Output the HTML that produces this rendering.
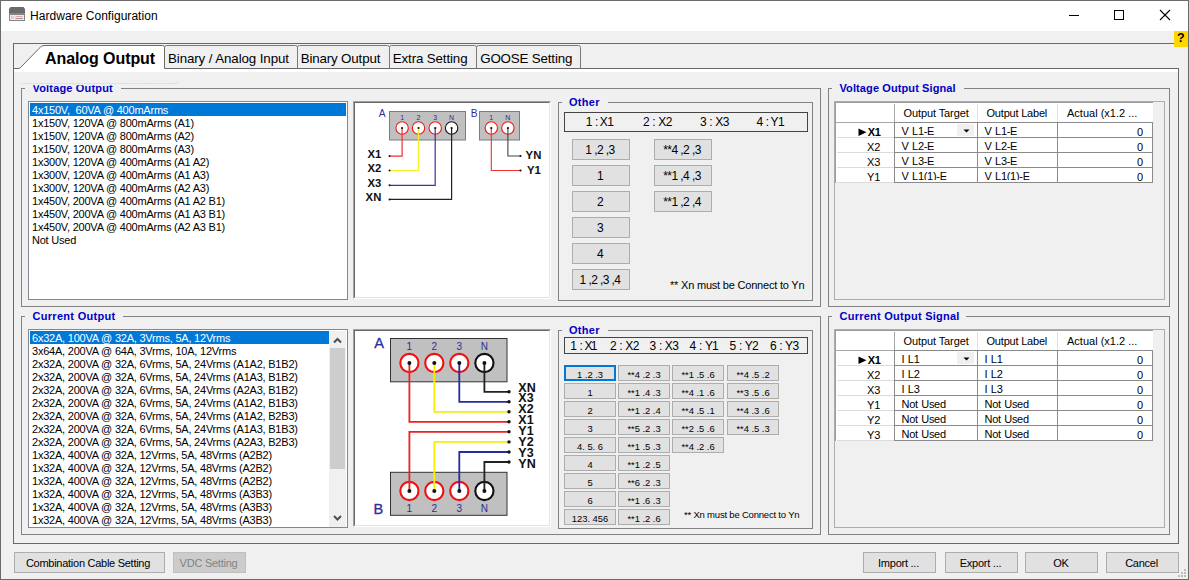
<!DOCTYPE html><html><head><meta charset="utf-8"><title>Hardware Configuration</title><style>
*{box-sizing:border-box;margin:0;padding:0}
html,body{width:1189px;height:580px;overflow:hidden;background:#f0f0f0}
body{position:relative;font-family:"Liberation Sans",sans-serif;font-size:11px;color:#000;-webkit-font-smoothing:antialiased}
.a{position:absolute}
.t{position:absolute;white-space:pre;line-height:1}
.win{left:0;top:0;width:1189px;height:580px;border:1px solid #6b6b6b;z-index:50;pointer-events:none}
.title{left:1px;top:1px;width:1187px;height:30px;background:#fff}
.gb{position:absolute;border:1px solid #838383}
.gbl{position:absolute;background:#f0f0f0;color:#0000c4;font-weight:bold;font-size:11px;white-space:pre;line-height:13px;height:13px}
.lb{position:absolute;background:#fff;border:1px solid #828790;overflow:hidden}
.li{position:absolute;left:1px;height:13px;line-height:15px;overflow:hidden;font-size:11px;letter-spacing:-0.22px;white-space:pre;padding-left:2px}
.sel{background:#0078d7;color:#fff}
.pb{position:absolute;background:#fff;border-style:solid;border-width:1px;border-color:#a0a0a0 #fff #fff #a0a0a0;}
.pb:before{content:"";position:absolute;left:0;top:0;right:0;bottom:0;border-style:solid;border-width:1px;border-color:#696969 #e3e3e3 #e3e3e3 #696969}
.btn{position:absolute;background:#e1e1e1;border:1px solid #adadad;text-align:center;white-space:pre;font-size:11px}
.btn.dis{background:#cccccc;border-color:#bfbfbf;color:#838383}
.btn.foc{border:2px solid #0078d7}
.lbox{position:absolute;border:1px solid #444}
svg{position:absolute;left:0;top:0;overflow:visible}
.grid{position:absolute;background:#f0f0f0;border-style:solid;border-width:1px;border-color:#a0a0a0 #fff #fff #a0a0a0}
.grid:before{content:"";position:absolute;left:0;top:0;right:0;bottom:0;border-style:solid;border-width:1px;border-color:#696969 #e3e3e3 #e3e3e3 #696969}
.cell{position:absolute;background:#fff;white-space:pre;font-size:11px;overflow:hidden}
</style></head><body>
<div class="a title"></div>
<svg width="1189" height="32" viewBox="0 0 1189 32">
<path d="M10.5 7 H23.5 L25 9 V13 H9 V9 Z" fill="#6a6a6a"/>
<rect x="9" y="13" width="16" height="8" fill="#858585"/>
<rect x="10" y="15" width="14" height="5" fill="#ececec"/>
<rect x="11" y="16" width="1.5" height="3" fill="#f5b5a8"/><rect x="13" y="16" width="1" height="3" fill="#f5c5b8"/>
<rect x="15.5" y="16" width="7" height="1" fill="#f0a0a8"/><rect x="15.5" y="18" width="7.5" height="1" fill="#9a9a9a"/>
<path d="M1069 15.5 H1079" stroke="#000" stroke-width="1" fill="none"/>
<rect x="1114.5" y="10.5" width="9" height="9" stroke="#000" stroke-width="1" fill="none"/>
<path d="M1160 10 L1170 20 M1170 10 L1160 20" stroke="#000" stroke-width="1.1" fill="none"/>
</svg>
<div class="t" style="left:30px;top:9px;font-size:12px;line-height:14px;letter-spacing:0.04px">Hardware Configuration</div>
<div class="a" style="left:1174px;top:31px;width:14px;height:16px;background:#ffd700;z-index:5"></div>
<div class="t" style="left:1177px;top:31px;font-size:12.5px;font-weight:bold;z-index:6;line-height:14px">?</div>
<div class="a" style="left:13px;top:43px;width:1175px;height:1px;background:#696969"></div>
<div class="a" style="left:13px;top:43px;width:1px;height:501px;background:#696969"></div>
<div class="a" style="left:13px;top:68px;width:1166px;height:476px;border:1px solid #696969"></div>
<div class="a" style="left:14px;top:69px;width:1164px;height:3px;background:#fff"></div>
<svg width="1189" height="80" viewBox="0 0 1189 80">
<path d="M18 68.5 C20 68.5 20.5 67.5 22 66 L39 48.5 C41 46.5 42 45.5 45 45.5 H162.500 Q164.500 45.500 164.500 47.500 V69 H18 Z" fill="#fff" stroke="none"/>
<path d="M13 68.5 H18 C20 68.5 20.5 67.500 22 66 L39 48.500 C41 46.500 42 45.500 45 45.500 H162.500 Q164.500 45.500 164.500 47.500 V68.500" fill="none" stroke="#696969" stroke-width="1"/>
<path d="M164.500 47.500 Q164.500 45.500 166.500 45.500 H295.500 Q297.500 45.500 297.500 47.500 V68.500" fill="none" stroke="#7a7a7a"/>
<path d="M297.500 47.500 Q297.500 45.500 299.500 45.500 H387.500 Q389.500 45.500 389.500 47.500 V68.500" fill="none" stroke="#7a7a7a"/>
<path d="M389.500 47.500 Q389.500 45.500 391.500 45.500 H474.500 Q476.500 45.500 476.500 47.500 V68.500" fill="none" stroke="#7a7a7a"/>
<path d="M476.500 47.500 Q476.500 45.500 478.500 45.500 H578.500 Q580.500 45.500 580.500 47.500 V68.500" fill="none" stroke="#7a7a7a"/>
</svg>
<div class="t" style="left:45px;top:50px;font-size:16px;font-weight:bold;line-height:18px;letter-spacing:-0.08px">Analog Output</div>
<div class="t" style="left:168px;top:51px;font-size:13.33px;line-height:16px;letter-spacing:-0.1px">Binary / Analog Input</div>
<div class="t" style="left:300.7px;top:51px;font-size:13.33px;line-height:16px;letter-spacing:-0.15px">Binary Output</div>
<div class="t" style="left:392.8px;top:51px;font-size:13.33px;line-height:16px;letter-spacing:-0.13px">Extra Setting</div>
<div class="t" style="left:480.2px;top:51px;font-size:13.33px;line-height:16px;letter-spacing:-0.16px">GOOSE Setting</div>
<div class="a" style="left:21px;top:83px;width:156px;height:1px;background:repeating-linear-gradient(90deg,#dcdcdc 0,#dcdcdc 2px,#e9e9e9 2px,#e9e9e9 3px)"></div><div class="a" style="left:177px;top:81px;width:1px;height:3px;background:#dfdfdf"></div>
<div class="gb" style="left:21px;top:88px;width:800px;height:219px"></div>
<div class="gbl" style="left:25.0px;top:82px;width:96.0px;padding-left:7.500px;letter-spacing:0.17px;clip-path:inset(3.2px 0 0 0)">Voltage Output</div>
<div class="gb" style="left:21px;top:316px;width:800px;height:219px"></div>
<div class="gbl" style="left:25.0px;top:310px;width:97.5px;padding-left:7.500px;letter-spacing:0.3px">Current Output</div>
<div class="gb" style="left:828px;top:88px;width:342px;height:219px"></div>
<div class="gbl" style="left:832.0px;top:82px;width:132.0px;padding-left:7.500px;letter-spacing:0.1px">Voltage Output Signal</div>
<div class="gb" style="left:828px;top:316px;width:342px;height:219px"></div>
<div class="gbl" style="left:832.0px;top:310px;width:133.5px;padding-left:7.500px;letter-spacing:0.25px">Current Output Signal</div>
<div class="gb" style="left:558px;top:102px;width:255px;height:199px"></div>
<div class="gbl" style="left:561.5px;top:96px;width:46.5px;padding-left:7.500px;letter-spacing:0.3px">Other</div>
<div class="gb" style="left:558px;top:330px;width:255px;height:199px"></div>
<div class="gbl" style="left:561.5px;top:324px;width:46.5px;padding-left:7.500px;letter-spacing:0.3px">Other</div>
<div class="lb" style="left:28px;top:101px;width:320px;height:199px">
<div class="li sel" style="top:1px;width:316px">4x150V,  60VA @ 400mArms</div>
<div class="li" style="top:14px;width:316px">1x150V, 120VA @ 800mArms (A1)</div>
<div class="li" style="top:27px;width:316px">1x150V, 120VA @ 800mArms (A2)</div>
<div class="li" style="top:40px;width:316px">1x150V, 120VA @ 800mArms (A3)</div>
<div class="li" style="top:53px;width:316px">1x300V, 120VA @ 400mArms (A1 A2)</div>
<div class="li" style="top:66px;width:316px">1x300V, 120VA @ 400mArms (A1 A3)</div>
<div class="li" style="top:79px;width:316px">1x300V, 120VA @ 400mArms (A2 A3)</div>
<div class="li" style="top:92px;width:316px">1x450V, 200VA @ 400mArms (A1 A2 B1)</div>
<div class="li" style="top:105px;width:316px">1x450V, 200VA @ 400mArms (A1 A3 B1)</div>
<div class="li" style="top:118px;width:316px">1x450V, 200VA @ 400mArms (A2 A3 B1)</div>
<div class="li" style="top:131px;width:316px">Not Used</div>
</div>
<div class="lb" style="left:28px;top:329px;width:320px;height:199px">
<div class="li sel" style="top:1px;width:299px">6x32A, 100VA @ 32A, 3Vrms, 5A, 12Vrms</div>
<div class="li" style="top:14px;width:299px">3x64A, 200VA @ 64A, 3Vrms, 10A, 12Vrms</div>
<div class="li" style="top:27px;width:299px">2x32A, 200VA @ 32A, 6Vrms, 5A, 24Vrms (A1A2, B1B2)</div>
<div class="li" style="top:40px;width:299px">2x32A, 200VA @ 32A, 6Vrms, 5A, 24Vrms (A1A3, B1B2)</div>
<div class="li" style="top:53px;width:299px">2x32A, 200VA @ 32A, 6Vrms, 5A, 24Vrms (A2A3, B1B2)</div>
<div class="li" style="top:66px;width:299px">2x32A, 200VA @ 32A, 6Vrms, 5A, 24Vrms (A1A2, B1B3)</div>
<div class="li" style="top:79px;width:299px">2x32A, 200VA @ 32A, 6Vrms, 5A, 24Vrms (A1A2, B2B3)</div>
<div class="li" style="top:92px;width:299px">2x32A, 200VA @ 32A, 6Vrms, 5A, 24Vrms (A1A3, B1B3)</div>
<div class="li" style="top:105px;width:299px">2x32A, 200VA @ 32A, 6Vrms, 5A, 24Vrms (A2A3, B2B3)</div>
<div class="li" style="top:118px;width:299px">1x32A, 400VA @ 32A, 12Vrms, 5A, 48Vrms (A2B2)</div>
<div class="li" style="top:131px;width:299px">1x32A, 400VA @ 32A, 12Vrms, 5A, 48Vrms (A2B2)</div>
<div class="li" style="top:144px;width:299px">1x32A, 400VA @ 32A, 12Vrms, 5A, 48Vrms (A2B2)</div>
<div class="li" style="top:157px;width:299px">1x32A, 400VA @ 32A, 12Vrms, 5A, 48Vrms (A3B3)</div>
<div class="li" style="top:170px;width:299px">1x32A, 400VA @ 32A, 12Vrms, 5A, 48Vrms (A3B3)</div>
<div class="li" style="top:183px;width:299px">1x32A, 400VA @ 32A, 12Vrms, 5A, 48Vrms (A3B3)</div>
<div class="a" style="left:300px;top:1px;width:17px;height:197px;background:#f0f0f0"></div>
<div class="a" style="left:301px;top:18px;width:15px;height:121px;background:#cdcdcd"></div>
<svg width="320" height="199" viewBox="0 0 320 199"><path d="M305 12.5 L308.5 9 L312 12.500" fill="none" stroke="#505050" stroke-width="2"/><path d="M305 186 L308.5 189.500 L312 186" fill="none" stroke="#505050" stroke-width="2"/></svg>
</div>
<div class="pb" style="left:353px;top:101px;width:198px;height:198px"></div>
<div class="pb" style="left:353px;top:329px;width:198px;height:198px"></div>
<svg width="1189" height="580" viewBox="0 0 1189 580" style="font-family:'Liberation Sans',sans-serif">
<rect x="389.500" y="111.500" width="76" height="28.500" fill="#c0c0c0" stroke="#7d7d7d"/>
<rect x="479.500" y="111.500" width="40" height="28.500" fill="#c0c0c0" stroke="#7d7d7d"/>
<circle cx="402.1" cy="128" r="6.2" fill="#fff" stroke="#f01818" stroke-width="1.1"/>
<circle cx="418.5" cy="128" r="6.2" fill="#fff" stroke="#f01818" stroke-width="1.1"/>
<circle cx="435.2" cy="128" r="6.2" fill="#fff" stroke="#f01818" stroke-width="1.1"/>
<circle cx="451.6" cy="128" r="6.2" fill="#fff" stroke="#111" stroke-width="1.1"/>
<circle cx="491.3" cy="128" r="6.2" fill="#fff" stroke="#f01818" stroke-width="1.1"/>
<circle cx="507.9" cy="128" r="6.2" fill="#fff" stroke="#f01818" stroke-width="1.1"/>
<path d="M402.1 128 V156.05 H390" fill="none" stroke="#f03030" stroke-width="1.2"/>
<circle cx="389.500" cy="156.05" r="1" fill="#111"/>
<circle cx="402.1" cy="128" r="1.1" fill="#111"/>
<path d="M418.5 128 V170.5 H390" fill="none" stroke="#f5ee20" stroke-width="1.2"/>
<circle cx="389.500" cy="170.5" r="1" fill="#111"/>
<circle cx="418.5" cy="128" r="1.1" fill="#111"/>
<path d="M435.2 128 V185.3 H390" fill="none" stroke="#3434ac" stroke-width="1.2"/>
<circle cx="389.500" cy="185.3" r="1" fill="#111"/>
<circle cx="435.2" cy="128" r="1.1" fill="#111"/>
<path d="M451.6 128 V199.4 H390" fill="none" stroke="#222" stroke-width="1.2"/>
<circle cx="389.500" cy="199.4" r="1" fill="#111"/>
<circle cx="451.6" cy="128" r="1.1" fill="#111"/>
<path d="M507.9 128 V156 H520.500" fill="none" stroke="#444" stroke-width="1.1"/>
<path d="M491.3 128 V170.500 H520.500" fill="none" stroke="#f03030" stroke-width="1.1"/>
<circle cx="507.9" cy="128" r="1.1" fill="#111"/>
<circle cx="491.3" cy="128" r="1.1" fill="#111"/>
<circle cx="520.5" cy="156" r="1.1" fill="#111"/>
<circle cx="520.5" cy="170.5" r="1.1" fill="#111"/>
<text x="402.1" y="119.500" font-size="7" fill="#2c2c9c" text-anchor="middle">1</text>
<text x="418.5" y="119.500" font-size="7" fill="#2c2c9c" text-anchor="middle">2</text>
<text x="435.2" y="119.500" font-size="7" fill="#2c2c9c" text-anchor="middle">3</text>
<text x="451.6" y="119.500" font-size="7" fill="#2c2c9c" text-anchor="middle">N</text>
<text x="491.3" y="119.500" font-size="7" fill="#2c2c9c" text-anchor="middle">1</text>
<text x="507.9" y="119.500" font-size="7" fill="#2c2c9c" text-anchor="middle">N</text>
<text x="378.800" y="117" font-size="10.200" fill="#2c2c9c">A</text>
<text x="470.800" y="117" font-size="10.200" fill="#2c2c9c">B</text>
<text x="381.300" y="157.8" font-size="11.300" font-weight="bold" fill="#111" text-anchor="end">X1</text>
<text x="381.300" y="172.3" font-size="11.300" font-weight="bold" fill="#111" text-anchor="end">X2</text>
<text x="381.300" y="186.8" font-size="11.300" font-weight="bold" fill="#111" text-anchor="end">X3</text>
<text x="381.300" y="201.3" font-size="11.300" font-weight="bold" fill="#111" text-anchor="end">XN</text>
<text x="525.600" y="159.400" font-size="11.300" font-weight="bold" fill="#111">YN</text>
<text x="527" y="173.900" font-size="11.300" font-weight="bold" fill="#111">Y1</text>
<rect x="390.500" y="338.500" width="116.500" height="43.300" fill="#c0c0c0" stroke="#333"/>
<rect x="390.500" y="472.300" width="116.500" height="43" fill="#c0c0c0" stroke="#333"/>
<circle cx="409.4" cy="363" r="9.1" fill="#fff" stroke="#f01010" stroke-width="2.1"/>
<circle cx="409.4" cy="491" r="9.1" fill="#fff" stroke="#f01010" stroke-width="2.1"/>
<circle cx="434.3" cy="363" r="9.1" fill="#fff" stroke="#f01010" stroke-width="2.1"/>
<circle cx="434.3" cy="491" r="9.1" fill="#fff" stroke="#f01010" stroke-width="2.1"/>
<circle cx="459.3" cy="363" r="9.1" fill="#fff" stroke="#f01010" stroke-width="2.1"/>
<circle cx="459.3" cy="491" r="9.1" fill="#fff" stroke="#f01010" stroke-width="2.1"/>
<circle cx="484.4" cy="363" r="9.1" fill="#fff" stroke="#111" stroke-width="2.1"/>
<circle cx="484.4" cy="491" r="9.1" fill="#fff" stroke="#111" stroke-width="2.1"/>
<path d="M409.4 363 V421.8 H509" fill="none" stroke="#f02020" stroke-width="1.8"/>
<path d="M409.4 491 V431.8 H509" fill="none" stroke="#f02020" stroke-width="1.8"/>
<circle cx="509" cy="421.8" r="1.7" fill="#111"/>
<circle cx="509" cy="431.8" r="1.7" fill="#111"/>
<circle cx="409.4" cy="363" r="2" fill="#111"/><circle cx="409.4" cy="491" r="2" fill="#111"/>
<path d="M434.3 363 V411.8 H509" fill="none" stroke="#f8f000" stroke-width="1.8"/>
<path d="M434.3 491 V441.9 H509" fill="none" stroke="#f8f000" stroke-width="1.8"/>
<circle cx="509" cy="411.8" r="1.7" fill="#111"/>
<circle cx="509" cy="441.9" r="1.7" fill="#111"/>
<circle cx="434.3" cy="363" r="2" fill="#111"/><circle cx="434.3" cy="491" r="2" fill="#111"/>
<path d="M459.3 363 V401.8 H509" fill="none" stroke="#2a2aa0" stroke-width="1.8"/>
<path d="M459.3 491 V452 H509" fill="none" stroke="#2a2aa0" stroke-width="1.8"/>
<circle cx="509" cy="401.8" r="1.7" fill="#111"/>
<circle cx="509" cy="452" r="1.7" fill="#111"/>
<circle cx="459.3" cy="363" r="2" fill="#111"/><circle cx="459.3" cy="491" r="2" fill="#111"/>
<path d="M484.4 363 V391.8 H509" fill="none" stroke="#222" stroke-width="1.8"/>
<path d="M484.4 491 V462 H509" fill="none" stroke="#222" stroke-width="1.8"/>
<circle cx="509" cy="391.8" r="1.7" fill="#111"/>
<circle cx="509" cy="462" r="1.7" fill="#111"/>
<circle cx="484.4" cy="363" r="2" fill="#111"/><circle cx="484.4" cy="491" r="2" fill="#111"/>
<text x="409.4" y="349.500" font-size="10" fill="#2c2c9c" text-anchor="middle">1</text>
<text x="409.4" y="512" font-size="10" fill="#2c2c9c" text-anchor="middle">1</text>
<text x="434.3" y="349.500" font-size="10" fill="#2c2c9c" text-anchor="middle">2</text>
<text x="434.3" y="512" font-size="10" fill="#2c2c9c" text-anchor="middle">2</text>
<text x="459.3" y="349.500" font-size="10" fill="#2c2c9c" text-anchor="middle">3</text>
<text x="459.3" y="512" font-size="10" fill="#2c2c9c" text-anchor="middle">3</text>
<text x="484.4" y="349.500" font-size="10" fill="#2c2c9c" text-anchor="middle">N</text>
<text x="484.4" y="512" font-size="10" fill="#2c2c9c" text-anchor="middle">N</text>
<text x="374.200" y="347.600" font-size="14.600" fill="#2c2c9c" stroke="#2c2c9c" stroke-width="0.3">A</text>
<text x="373.500" y="514.400" font-size="14.600" fill="#2c2c9c" stroke="#2c2c9c" stroke-width="0.3">B</text>
<text x="518.300" y="391.5" font-size="12.500" font-weight="bold" fill="#111">XN</text>
<text x="518.300" y="402.4" font-size="12.500" font-weight="bold" fill="#111">X3</text>
<text x="518.300" y="413.3" font-size="12.500" font-weight="bold" fill="#111">X2</text>
<text x="518.300" y="424.2" font-size="12.500" font-weight="bold" fill="#111">X1</text>
<text x="518.300" y="435.1" font-size="12.500" font-weight="bold" fill="#111">Y1</text>
<text x="518.300" y="446" font-size="12.500" font-weight="bold" fill="#111">Y2</text>
<text x="518.300" y="457" font-size="12.500" font-weight="bold" fill="#111">Y3</text>
<text x="518.300" y="468.1" font-size="12.500" font-weight="bold" fill="#111">YN</text>
</svg>
<div class="lbox" style="left:564px;top:112px;width:244px;height:20px"></div>
<div class="t" style="left:585.7px;top:115px;font-size:12px;line-height:14px;word-spacing:0.4px;letter-spacing:-0.55px">1 : <span style="margin-left:-1.2px;letter-spacing:-0.55px">X</span>1</div>
<div class="t" style="left:643px;top:115px;font-size:12px;line-height:14px;word-spacing:0.4px;letter-spacing:-0.55px">2 : X2</div>
<div class="t" style="left:700px;top:115px;font-size:12px;line-height:14px;word-spacing:0.4px;letter-spacing:-0.55px">3 : X3</div>
<div class="t" style="left:756.5px;top:115px;font-size:12px;line-height:14px;word-spacing:0.4px;letter-spacing:-0.55px">4 : <span style="margin-left:-1.2px;letter-spacing:-0.55px">Y</span>1</div>
<div class="btn" style="left:572px;top:139px;width:58px;height:21px;line-height:21px;font-size:12px;letter-spacing:-0.58px;padding-right:2px">1 ,2 ,3</div>
<div class="btn" style="left:572px;top:165px;width:58px;height:21px;line-height:21px;font-size:12px;letter-spacing:-0.58px;padding-right:2px">1</div>
<div class="btn" style="left:572px;top:191px;width:58px;height:21px;line-height:21px;font-size:12px;letter-spacing:-0.58px;padding-right:2px">2</div>
<div class="btn" style="left:572px;top:217px;width:58px;height:21px;line-height:21px;font-size:12px;letter-spacing:-0.58px;padding-right:2px">3</div>
<div class="btn" style="left:572px;top:243px;width:58px;height:21px;line-height:21px;font-size:12px;letter-spacing:-0.58px;padding-right:2px">4</div>
<div class="btn" style="left:572px;top:269px;width:58px;height:21px;line-height:21px;font-size:12px;letter-spacing:-0.58px;padding-right:2px">1 ,2 ,3 ,4</div>
<div class="btn" style="left:654px;top:139px;width:58px;height:21px;line-height:21px;font-size:12px;letter-spacing:-0.58px;padding-right:2px">**4 ,2 ,3</div>
<div class="btn" style="left:654px;top:165px;width:58px;height:21px;line-height:21px;font-size:12px;letter-spacing:-0.58px;padding-right:2px">**1 ,4 ,3</div>
<div class="btn" style="left:654px;top:191px;width:58px;height:21px;line-height:21px;font-size:12px;letter-spacing:-0.58px;padding-right:2px">**1 ,2 ,4</div>
<div class="t" style="left:670px;top:279px;font-size:11px;line-height:13px;letter-spacing:-0.2px">** Xn must be Connect to Yn</div>
<div class="lbox" style="left:564px;top:337px;width:244px;height:17px"></div>
<div class="t" style="left:570.3px;top:339px;font-size:12px;line-height:14px;word-spacing:0.4px;letter-spacing:-0.55px">1 : <span style="margin-left:-1.0px;letter-spacing:-1.75px">X</span>1</div>
<div class="t" style="left:610px;top:339px;font-size:12px;line-height:14px;word-spacing:0.4px;letter-spacing:-0.55px">2 : X2</div>
<div class="t" style="left:649.6px;top:339px;font-size:12px;line-height:14px;word-spacing:0.4px;letter-spacing:-0.55px">3 : X3</div>
<div class="t" style="left:689.6px;top:339px;font-size:12px;line-height:14px;word-spacing:0.4px;letter-spacing:-0.55px">4 : <span style="margin-left:0px;letter-spacing:-1.0px">Y</span>1</div>
<div class="t" style="left:729.6px;top:339px;font-size:12px;line-height:14px;word-spacing:0.4px;letter-spacing:-0.55px">5 : Y2</div>
<div class="t" style="left:769.9px;top:339px;font-size:12px;line-height:14px;word-spacing:0.4px;letter-spacing:-0.55px">6 : Y3</div>
<div class="btn foc" style="left:564px;top:365px;width:52px;height:16px;line-height:13px;font-size:9.400px;letter-spacing:-0.02px;padding-top:1px">1 .2 .3</div>
<div class="btn" style="left:564px;top:383px;width:52px;height:16px;line-height:15px;font-size:9.400px;letter-spacing:-0.02px;padding-top:1px">1</div>
<div class="btn" style="left:564px;top:401px;width:52px;height:16px;line-height:15px;font-size:9.400px;letter-spacing:-0.02px;padding-top:1px">2</div>
<div class="btn" style="left:564px;top:419px;width:52px;height:16px;line-height:15px;font-size:9.400px;letter-spacing:-0.02px;padding-top:1px">3</div>
<div class="btn" style="left:564px;top:437px;width:52px;height:16px;line-height:15px;font-size:9.400px;letter-spacing:-0.02px;padding-top:1px">4. 5. 6</div>
<div class="btn" style="left:564px;top:455px;width:52px;height:16px;line-height:15px;font-size:9.400px;letter-spacing:-0.02px;padding-top:1px">4</div>
<div class="btn" style="left:564px;top:473px;width:52px;height:16px;line-height:15px;font-size:9.400px;letter-spacing:-0.02px;padding-top:1px">5</div>
<div class="btn" style="left:564px;top:491px;width:52px;height:16px;line-height:15px;font-size:9.400px;letter-spacing:-0.02px;padding-top:1px">6</div>
<div class="btn" style="left:564px;top:509px;width:52px;height:16px;line-height:15px;font-size:9.400px;letter-spacing:-0.02px;padding-top:1px">123. 456</div>
<div class="btn" style="left:618px;top:365px;width:52px;height:16px;line-height:15px;font-size:9.400px;letter-spacing:-0.02px;padding-top:1px">**4 .2 .3</div>
<div class="btn" style="left:618px;top:383px;width:52px;height:16px;line-height:15px;font-size:9.400px;letter-spacing:-0.02px;padding-top:1px">**1 .4 .3</div>
<div class="btn" style="left:618px;top:401px;width:52px;height:16px;line-height:15px;font-size:9.400px;letter-spacing:-0.02px;padding-top:1px">**1 .2 .4</div>
<div class="btn" style="left:618px;top:419px;width:52px;height:16px;line-height:15px;font-size:9.400px;letter-spacing:-0.02px;padding-top:1px">**5 .2 .3</div>
<div class="btn" style="left:618px;top:437px;width:52px;height:16px;line-height:15px;font-size:9.400px;letter-spacing:-0.02px;padding-top:1px">**1 .5 .3</div>
<div class="btn" style="left:618px;top:455px;width:52px;height:16px;line-height:15px;font-size:9.400px;letter-spacing:-0.02px;padding-top:1px">**1 .2 .5</div>
<div class="btn" style="left:618px;top:473px;width:52px;height:16px;line-height:15px;font-size:9.400px;letter-spacing:-0.02px;padding-top:1px">**6 .2 .3</div>
<div class="btn" style="left:618px;top:491px;width:52px;height:16px;line-height:15px;font-size:9.400px;letter-spacing:-0.02px;padding-top:1px">**1 .6 .3</div>
<div class="btn" style="left:618px;top:509px;width:52px;height:16px;line-height:15px;font-size:9.400px;letter-spacing:-0.02px;padding-top:1px">**1 .2 .6</div>
<div class="btn" style="left:672px;top:365px;width:52px;height:16px;line-height:15px;font-size:9.400px;letter-spacing:-0.02px;padding-top:1px">**1 .5 .6</div>
<div class="btn" style="left:672px;top:383px;width:52px;height:16px;line-height:15px;font-size:9.400px;letter-spacing:-0.02px;padding-top:1px">**4 .1 .6</div>
<div class="btn" style="left:672px;top:401px;width:52px;height:16px;line-height:15px;font-size:9.400px;letter-spacing:-0.02px;padding-top:1px">**4 .5 .1</div>
<div class="btn" style="left:672px;top:419px;width:52px;height:16px;line-height:15px;font-size:9.400px;letter-spacing:-0.02px;padding-top:1px">**2 .5 .6</div>
<div class="btn" style="left:672px;top:437px;width:52px;height:16px;line-height:15px;font-size:9.400px;letter-spacing:-0.02px;padding-top:1px">**4 .2 .6</div>
<div class="btn" style="left:727px;top:365px;width:52px;height:16px;line-height:15px;font-size:9.400px;letter-spacing:-0.02px;padding-top:1px">**4 .5 .2</div>
<div class="btn" style="left:727px;top:383px;width:52px;height:16px;line-height:15px;font-size:9.400px;letter-spacing:-0.02px;padding-top:1px">**3 .5 .6</div>
<div class="btn" style="left:727px;top:401px;width:52px;height:16px;line-height:15px;font-size:9.400px;letter-spacing:-0.02px;padding-top:1px">**4 .3 .6</div>
<div class="btn" style="left:727px;top:419px;width:52px;height:16px;line-height:15px;font-size:9.400px;letter-spacing:-0.02px;padding-top:1px">**4 .5 .3</div>
<div class="t" style="left:684px;top:509px;font-size:9.500px;line-height:11px;letter-spacing:-0.2px">** Xn must be Connect to Yn</div>
<div class="a" style="left:834px;top:101px;width:331px;height:199px;border:1px solid #abadb3"></div>
<div class="a" style="left:835px;top:102px;width:318px;height:1px;background:#9c9c9f"></div>
<div class="a" style="left:835px;top:102px;width:1px;height:81px;background:#9c9c9f"></div>
<div class="a" style="left:836px;top:103px;width:317px;height:80px;background:#fff"></div>
<div class="a" style="left:894px;top:104px;width:1px;height:18px;background:#a6a6a6"></div>
<div class="a" style="left:977px;top:104px;width:1px;height:18px;background:#e0e0e0"></div>
<div class="a" style="left:1057px;top:104px;width:1px;height:18px;background:#e0e0e0"></div>
<div class="a" style="left:836px;top:122px;width:58px;height:1px;background:#a8a8a8"></div>
<div class="a" style="left:894px;top:122px;width:259px;height:1px;background:#8a8a8a"></div>
<div class="t" style="left:903.5px;top:107px;font-size:11px;line-height:13px;letter-spacing:-0.1px">Output Target</div>
<div class="t" style="left:986.5px;top:107px;font-size:11px;line-height:13px;letter-spacing:-0.2px">Output Label</div>
<div class="t" style="left:1067px;top:107px;font-size:11px;line-height:13px;letter-spacing:0px">Actual (x1.2 ...</div>
<div class="a" style="left:894px;top:122px;width:1px;height:61px;background:#8a8a8a"></div>
<div class="a" style="left:977px;top:122px;width:1px;height:61px;background:#8a8a8a"></div>
<div class="a" style="left:1057px;top:122px;width:1px;height:61px;background:#8a8a8a"></div>
<div class="a" style="left:1152px;top:122px;width:1px;height:61px;background:#8a8a8a"></div>
<div class="a" style="left:837px;top:137px;width:57px;height:1px;background:#dcdcdc"></div>
<div class="a" style="left:894px;top:137px;width:259px;height:1px;background:#8a8a8a"></div>
<div class="t" style="left:836px;width:44.500px;text-align:right;top:126px;font-weight:bold;letter-spacing:-0.4px;font-size:11px;line-height:13px">X1</div>
<div class="t" style="left:901.500px;top:125px;font-size:11px;line-height:13px;letter-spacing:-0.3px;word-spacing:0.8px">V L1-E</div>
<div class="t" style="left:984.500px;top:125px;font-size:11px;line-height:13px;letter-spacing:-0.3px;word-spacing:0.8px">V L1-E</div>
<div class="t" style="left:1100px;width:43px;text-align:right;top:126px;font-size:11px;line-height:13px">0</div>
<div class="a" style="left:957px;top:124px;width:17px;height:12px;background:#f0f0f0"></div>
<svg width="1189" height="580" viewBox="0 0 1189 580"><path d="M963.500 129.5 h6 l-3 3 z" fill="#000"/><path d="M858.500 128.5 l8 3.750 l-8 3.750 z" fill="#000"/></svg>
<div class="a" style="left:837px;top:152px;width:57px;height:1px;background:#dcdcdc"></div>
<div class="a" style="left:894px;top:152px;width:259px;height:1px;background:#8a8a8a"></div>
<div class="t" style="left:836px;width:44.500px;text-align:right;top:141px;font-size:11px;line-height:13px">X2</div>
<div class="t" style="left:901.500px;top:140px;font-size:11px;line-height:13px;letter-spacing:-0.3px;word-spacing:0.8px">V L2-E</div>
<div class="t" style="left:984.500px;top:140px;font-size:11px;line-height:13px;letter-spacing:-0.3px;word-spacing:0.8px">V L2-E</div>
<div class="t" style="left:1100px;width:43px;text-align:right;top:141px;font-size:11px;line-height:13px">0</div>
<div class="a" style="left:837px;top:167px;width:57px;height:1px;background:#dcdcdc"></div>
<div class="a" style="left:894px;top:167px;width:259px;height:1px;background:#8a8a8a"></div>
<div class="t" style="left:836px;width:44.500px;text-align:right;top:156px;font-size:11px;line-height:13px">X3</div>
<div class="t" style="left:901.500px;top:155px;font-size:11px;line-height:13px;letter-spacing:-0.3px;word-spacing:0.8px">V L3-E</div>
<div class="t" style="left:984.500px;top:155px;font-size:11px;line-height:13px;letter-spacing:-0.3px;word-spacing:0.8px">V L3-E</div>
<div class="t" style="left:1100px;width:43px;text-align:right;top:156px;font-size:11px;line-height:13px">0</div>
<div class="a" style="left:837px;top:182px;width:57px;height:1px;background:#dcdcdc"></div>
<div class="a" style="left:894px;top:182px;width:259px;height:1px;background:#8a8a8a"></div>
<div class="t" style="left:836px;width:44.500px;text-align:right;top:171px;font-size:11px;line-height:13px;clip-path:inset(0 0 3px 0)">Y1</div>
<div class="t" style="left:901.500px;top:170px;font-size:11px;line-height:13px;letter-spacing:-0.3px;word-spacing:0.8px;clip-path:inset(0 0 3px 0)">V L1(1)-E</div>
<div class="t" style="left:984.500px;top:170px;font-size:11px;line-height:13px;letter-spacing:-0.3px;word-spacing:0.8px;clip-path:inset(0 0 3px 0)">V L1(1)-E</div>
<div class="t" style="left:1100px;width:43px;text-align:right;top:171px;font-size:11px;line-height:13px;clip-path:inset(0 0 3px 0)">0</div>
<div class="a" style="left:834px;top:329px;width:331px;height:199px;border:1px solid #abadb3"></div>
<div class="a" style="left:835px;top:330px;width:318px;height:1px;background:#9c9c9f"></div>
<div class="a" style="left:835px;top:330px;width:1px;height:111px;background:#9c9c9f"></div>
<div class="a" style="left:836px;top:331px;width:317px;height:110px;background:#fff"></div>
<div class="a" style="left:894px;top:332px;width:1px;height:18px;background:#a6a6a6"></div>
<div class="a" style="left:977px;top:332px;width:1px;height:18px;background:#e0e0e0"></div>
<div class="a" style="left:1057px;top:332px;width:1px;height:18px;background:#e0e0e0"></div>
<div class="a" style="left:836px;top:350px;width:58px;height:1px;background:#a8a8a8"></div>
<div class="a" style="left:894px;top:350px;width:259px;height:1px;background:#8a8a8a"></div>
<div class="t" style="left:903.5px;top:335px;font-size:11px;line-height:13px;letter-spacing:-0.1px">Output Target</div>
<div class="t" style="left:986.5px;top:335px;font-size:11px;line-height:13px;letter-spacing:-0.2px">Output Label</div>
<div class="t" style="left:1067px;top:335px;font-size:11px;line-height:13px;letter-spacing:0px">Actual (x1.2 ...</div>
<div class="a" style="left:894px;top:350px;width:1px;height:91px;background:#8a8a8a"></div>
<div class="a" style="left:977px;top:350px;width:1px;height:91px;background:#8a8a8a"></div>
<div class="a" style="left:1057px;top:350px;width:1px;height:91px;background:#8a8a8a"></div>
<div class="a" style="left:1152px;top:350px;width:1px;height:91px;background:#8a8a8a"></div>
<div class="a" style="left:837px;top:365px;width:57px;height:1px;background:#dcdcdc"></div>
<div class="a" style="left:894px;top:365px;width:259px;height:1px;background:#8a8a8a"></div>
<div class="t" style="left:836px;width:44.500px;text-align:right;top:354px;font-weight:bold;letter-spacing:-0.4px;font-size:11px;line-height:13px">X1</div>
<div class="t" style="left:901.500px;top:353px;font-size:11px;line-height:13px;letter-spacing:-0.3px;word-spacing:0.8px">I L1</div>
<div class="t" style="left:984.500px;top:353px;font-size:11px;line-height:13px;letter-spacing:-0.3px;word-spacing:0.8px">I L1</div>
<div class="t" style="left:1100px;width:43px;text-align:right;top:354px;font-size:11px;line-height:13px">0</div>
<div class="a" style="left:957px;top:352px;width:17px;height:12px;background:#f0f0f0"></div>
<svg width="1189" height="580" viewBox="0 0 1189 580"><path d="M963.500 357.5 h6 l-3 3 z" fill="#000"/><path d="M858.500 356.5 l8 3.750 l-8 3.750 z" fill="#000"/></svg>
<div class="a" style="left:837px;top:380px;width:57px;height:1px;background:#dcdcdc"></div>
<div class="a" style="left:894px;top:380px;width:259px;height:1px;background:#8a8a8a"></div>
<div class="t" style="left:836px;width:44.500px;text-align:right;top:369px;font-size:11px;line-height:13px">X2</div>
<div class="t" style="left:901.500px;top:368px;font-size:11px;line-height:13px;letter-spacing:-0.3px;word-spacing:0.8px">I L2</div>
<div class="t" style="left:984.500px;top:368px;font-size:11px;line-height:13px;letter-spacing:-0.3px;word-spacing:0.8px">I L2</div>
<div class="t" style="left:1100px;width:43px;text-align:right;top:369px;font-size:11px;line-height:13px">0</div>
<div class="a" style="left:837px;top:395px;width:57px;height:1px;background:#dcdcdc"></div>
<div class="a" style="left:894px;top:395px;width:259px;height:1px;background:#8a8a8a"></div>
<div class="t" style="left:836px;width:44.500px;text-align:right;top:384px;font-size:11px;line-height:13px">X3</div>
<div class="t" style="left:901.500px;top:383px;font-size:11px;line-height:13px;letter-spacing:-0.3px;word-spacing:0.8px">I L3</div>
<div class="t" style="left:984.500px;top:383px;font-size:11px;line-height:13px;letter-spacing:-0.3px;word-spacing:0.8px">I L3</div>
<div class="t" style="left:1100px;width:43px;text-align:right;top:384px;font-size:11px;line-height:13px">0</div>
<div class="a" style="left:837px;top:410px;width:57px;height:1px;background:#dcdcdc"></div>
<div class="a" style="left:894px;top:410px;width:259px;height:1px;background:#8a8a8a"></div>
<div class="t" style="left:836px;width:44.500px;text-align:right;top:399px;font-size:11px;line-height:13px">Y1</div>
<div class="t" style="left:901.500px;top:398px;font-size:11px;line-height:13px;letter-spacing:-0.3px;word-spacing:0.8px">Not Used</div>
<div class="t" style="left:984.500px;top:398px;font-size:11px;line-height:13px;letter-spacing:-0.3px;word-spacing:0.8px">Not Used</div>
<div class="t" style="left:1100px;width:43px;text-align:right;top:399px;font-size:11px;line-height:13px">0</div>
<div class="a" style="left:837px;top:425px;width:57px;height:1px;background:#dcdcdc"></div>
<div class="a" style="left:894px;top:425px;width:259px;height:1px;background:#8a8a8a"></div>
<div class="t" style="left:836px;width:44.500px;text-align:right;top:414px;font-size:11px;line-height:13px">Y2</div>
<div class="t" style="left:901.500px;top:413px;font-size:11px;line-height:13px;letter-spacing:-0.3px;word-spacing:0.8px">Not Used</div>
<div class="t" style="left:984.500px;top:413px;font-size:11px;line-height:13px;letter-spacing:-0.3px;word-spacing:0.8px">Not Used</div>
<div class="t" style="left:1100px;width:43px;text-align:right;top:414px;font-size:11px;line-height:13px">0</div>
<div class="a" style="left:837px;top:440px;width:57px;height:1px;background:#dcdcdc"></div>
<div class="a" style="left:894px;top:440px;width:259px;height:1px;background:#8a8a8a"></div>
<div class="t" style="left:836px;width:44.500px;text-align:right;top:429px;font-size:11px;line-height:13px">Y3</div>
<div class="t" style="left:901.500px;top:428px;font-size:11px;line-height:13px;letter-spacing:-0.3px;word-spacing:0.8px">Not Used</div>
<div class="t" style="left:984.500px;top:428px;font-size:11px;line-height:13px;letter-spacing:-0.3px;word-spacing:0.8px">Not Used</div>
<div class="t" style="left:1100px;width:43px;text-align:right;top:429px;font-size:11px;line-height:13px">0</div>
<div class="btn" style="left:14px;top:552px;width:151px;height:21px;line-height:21px;font-size:11px;letter-spacing:-0.27px;padding-right:3px">Combination Cable Setting</div>
<div class="btn dis" style="left:173px;top:552px;width:73px;height:21px;line-height:21px;font-size:11px;letter-spacing:-0.25px;padding-right:2px">VDC Setting</div>
<div class="btn" style="left:863px;top:552px;width:73px;height:21px;line-height:21px;font-size:11px;letter-spacing:-0.25px;padding-right:2px">Import ...</div>
<div class="btn" style="left:945px;top:552px;width:73px;height:21px;line-height:21px;font-size:11px;letter-spacing:-0.25px;padding-right:2px">Export ...</div>
<div class="btn" style="left:1025px;top:552px;width:73px;height:21px;line-height:21px;font-size:11px;letter-spacing:-0.2px;padding-right:1px">OK</div>
<div class="btn" style="left:1106px;top:552px;width:73px;height:21px;line-height:21px;font-size:11px;letter-spacing:-0.25px;padding-right:2px">Cancel</div>
<svg width="1189" height="580" viewBox="0 0 1189 580"><g fill="#bcbcbc"><rect x="1184" y="569" width="2" height="2"/><rect x="1184" y="572" width="2" height="2"/><rect x="1184" y="575" width="2" height="2"/><rect x="1181" y="572" width="2" height="2"/><rect x="1181" y="575" width="2" height="2"/><rect x="1178" y="575" width="2" height="2"/></g></svg>
<div class="a win"></div>
</body></html>
